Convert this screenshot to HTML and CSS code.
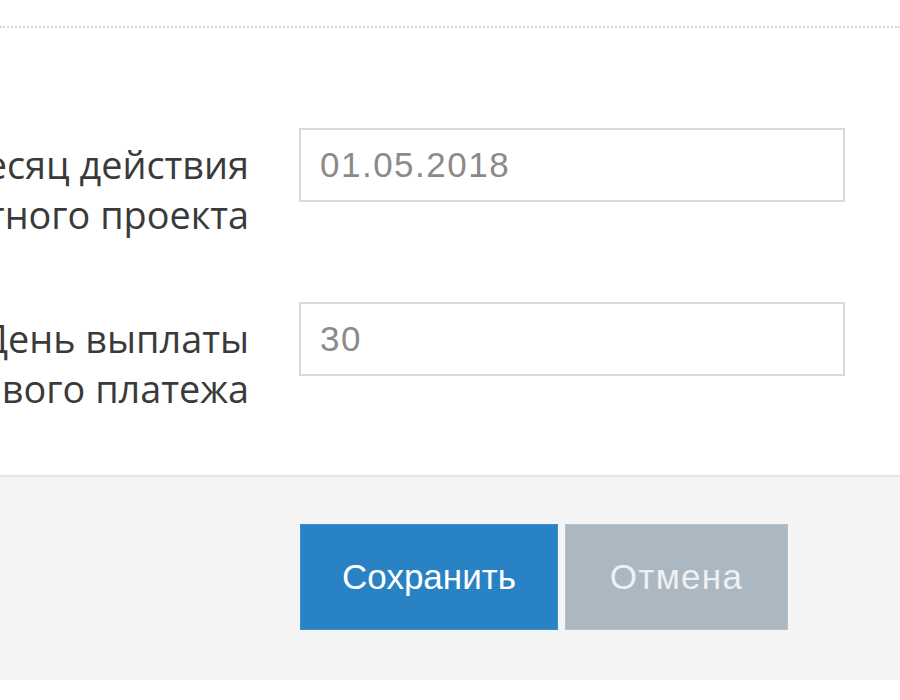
FILE: index.html
```html
<!DOCTYPE html>
<html lang="ru">
<head>
<meta charset="utf-8">
<link rel="stylesheet" href="styles.css">
</head>
<body>
<div class="page">
  <div class="divider"></div>
  <form class="form">
    <div class="row">
      <div class="label">
        <span>Месяц действия</span>
        <span>кредитного проекта</span>
      </div>
      <input class="field" type="text" value="01.05.2018">
    </div>
    <div class="row">
      <div class="label">
        <span>День выплаты</span>
        <span>первого платежа</span>
      </div>
      <input class="field" type="text" value="30">
    </div>
  </form>
  <div class="footer">
    <button class="btn btn-save" type="button">Сохранить</button>
    <button class="btn btn-cancel" type="button">Отмена</button>
  </div>
</div>
</body>
</html>
```
FILE: styles.css
```css
html, body {
  margin: 0;
  padding: 0;
  background: #ffffff;
  overflow: hidden;
}
.page {
  width: 900px;
  height: 700px;
  display: flex;
  flex-direction: column;
}
.divider {
  flex: none;
  margin-top: 26px;
  border-top: 2px dotted #d8d8d8;
}
.form {
  flex: none;
  padding-top: 100px;
  display: flex;
  flex-direction: column;
  gap: 62px;
  height: 447px;
  box-sizing: border-box;
}
.row {
  display: flex;
  align-items: flex-start;
  gap: 50px;
}
.label {
  width: 249px;
  flex: none;
  display: flex;
  flex-direction: column;
  align-items: flex-end;
  padding-top: 12px;
  font-family: "Open Sans", "Noto Sans", sans-serif;
  font-size: 37.8px;
  line-height: 50px;
  color: #3a3a3a;
}
.label span {
  white-space: nowrap;
}
.field {
  width: 546px;
  height: 74px;
  box-sizing: border-box;
  margin: 0;
  border: 2px solid #d9d9d9;
  padding: 0 19px;
  font-family: "Liberation Sans", Arial, sans-serif;
  font-size: 35px;
  letter-spacing: 1.5px;
  color: #8a8a8a;
  background: #ffffff;
  outline: none;
}
.footer {
  flex: none;
  border-top: 2px solid #e6e6e6;
  background: #f4f4f4;
  height: 205px;
  box-sizing: border-box;
  padding: 47px 0 0 300px;
  display: flex;
  gap: 7px;
  align-items: flex-start;
}
.btn {
  height: 106px;
  margin: 0;
  padding: 0;
  font-family: "Liberation Sans", Arial, sans-serif;
  font-size: 35px;
  cursor: pointer;
}
.btn-save {
  width: 258px;
  background: #2882c4;
  border: 1px solid #3a8dcb;
  color: #ffffff;
}
.btn-cancel {
  width: 223px;
  background: #abb8c1;
  border: 1px solid #b5c1c9;
  color: #eef1f3;
  letter-spacing: 1.3px;
}
```
